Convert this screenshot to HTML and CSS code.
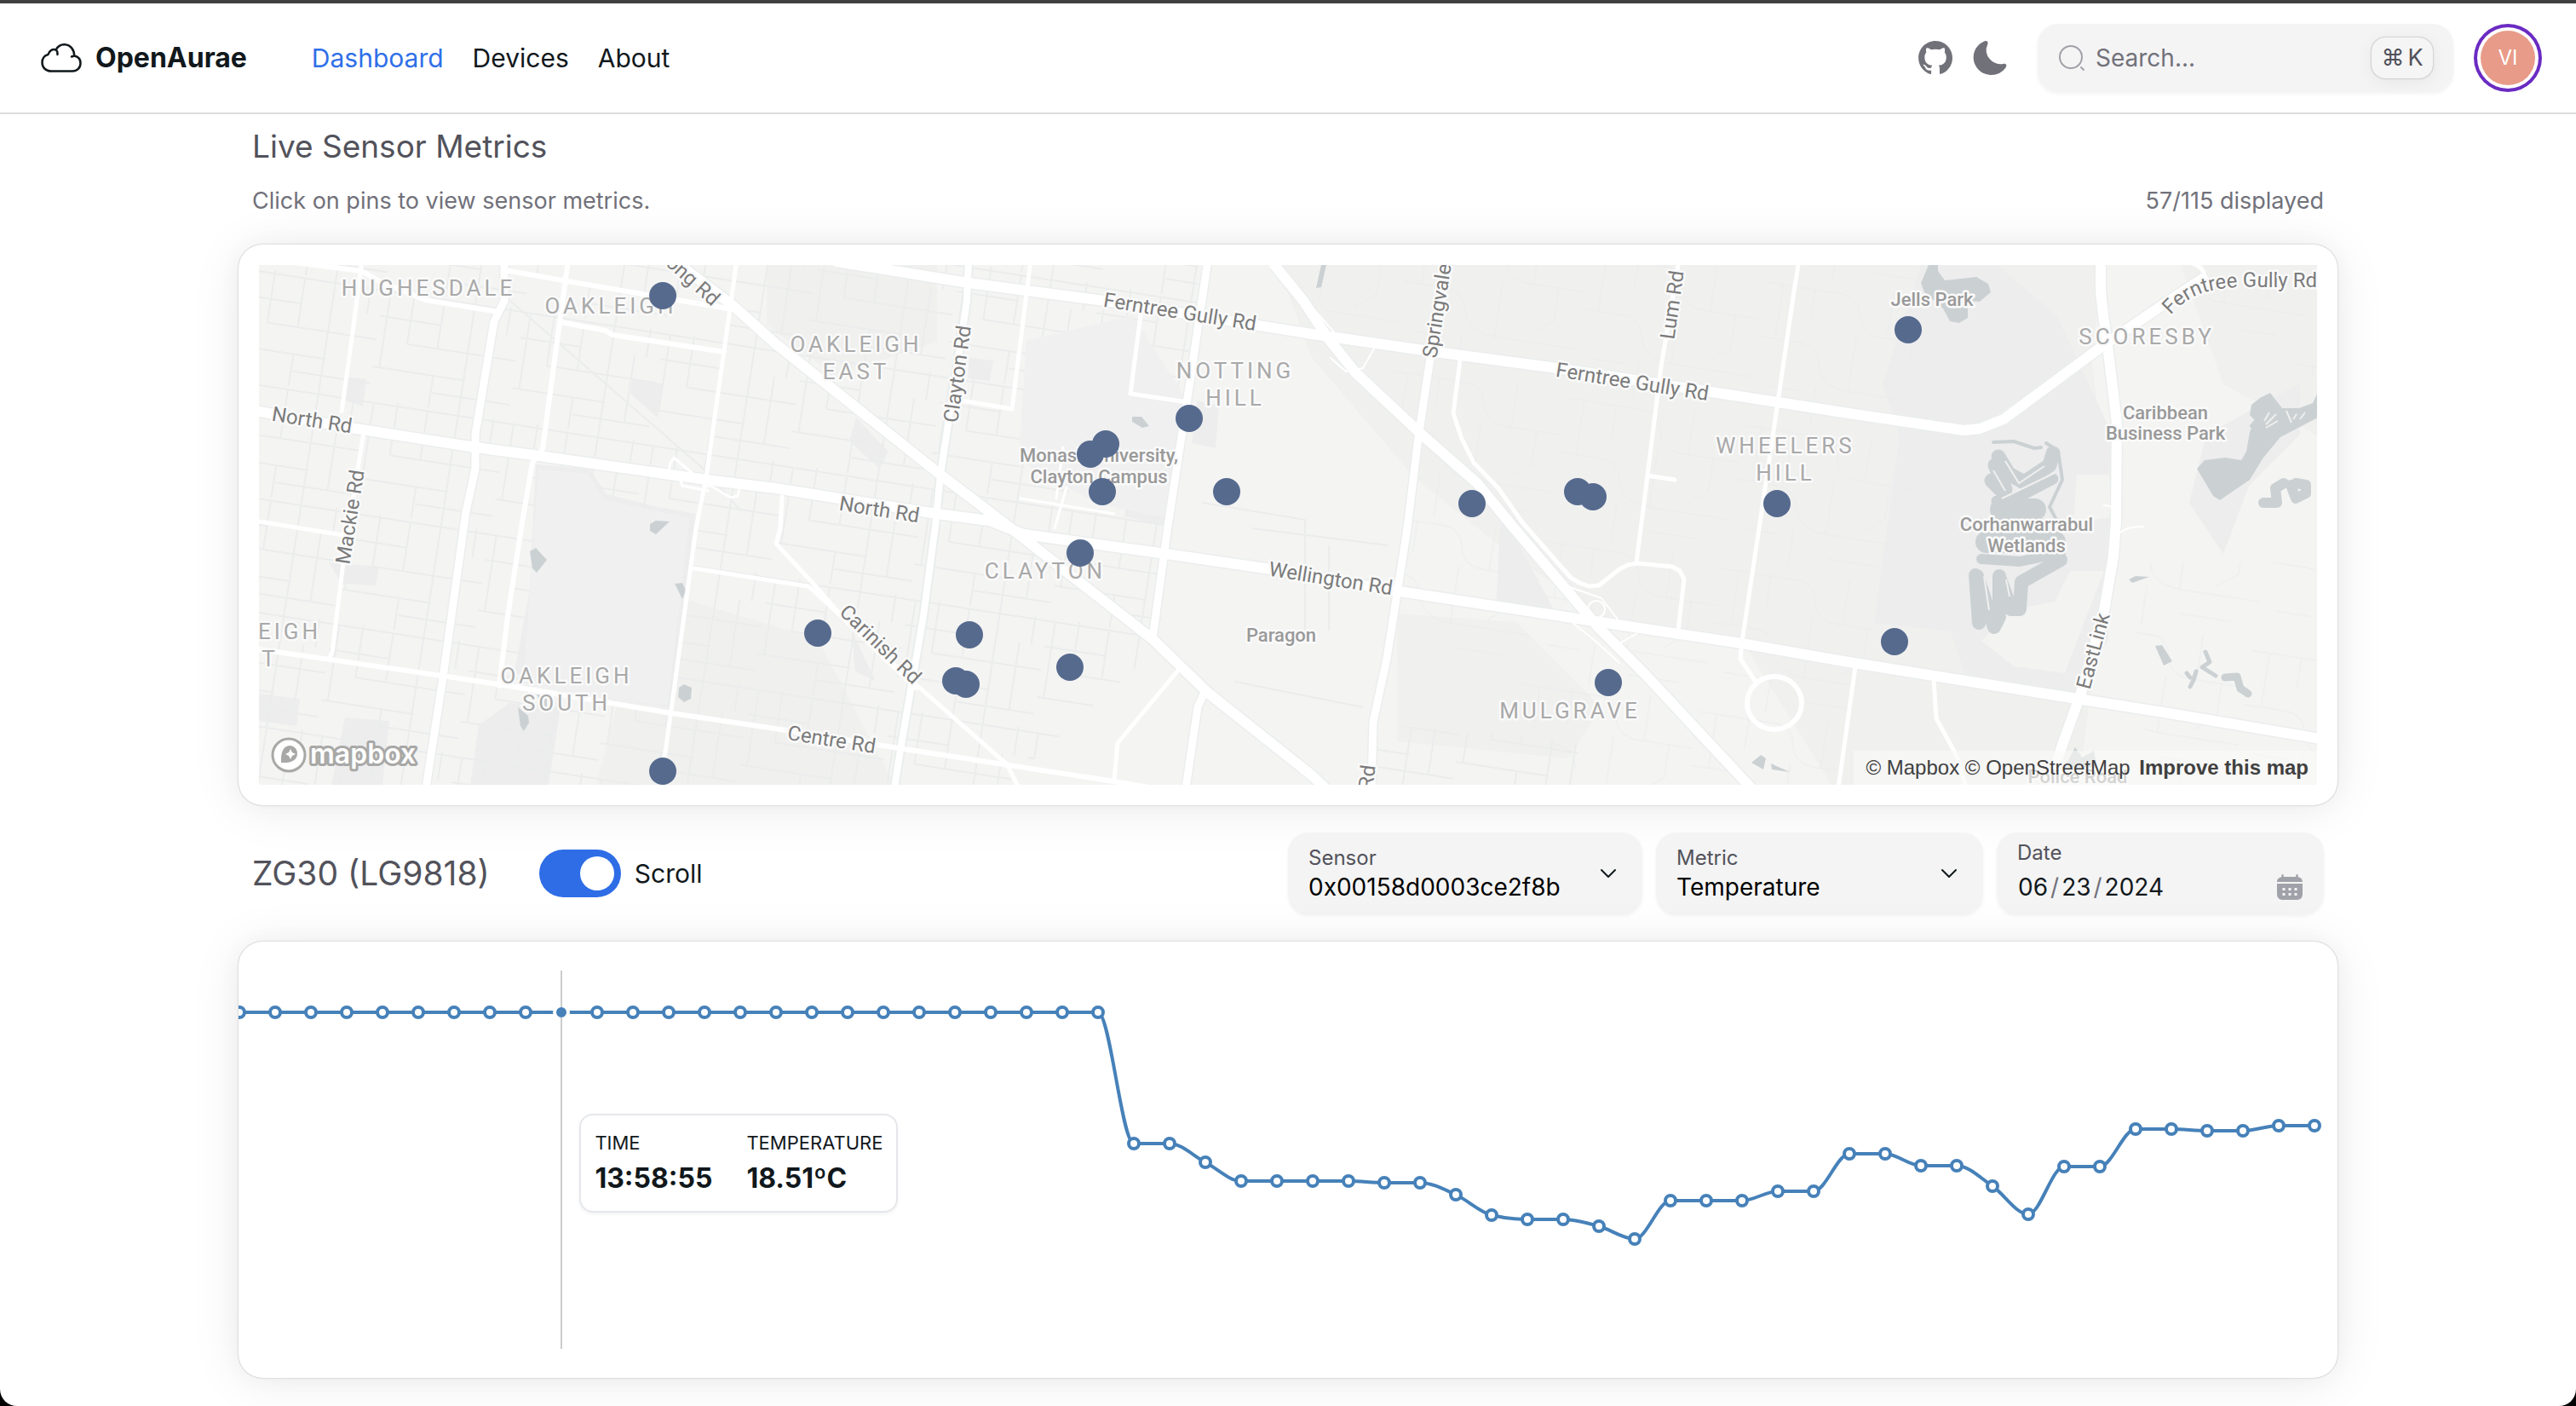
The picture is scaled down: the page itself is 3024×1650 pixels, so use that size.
FILE: index.html
```html
<!DOCTYPE html>
<html lang="en">
<head>
<meta charset="utf-8">
<title>OpenAurae</title>
<link rel="stylesheet" href="styles.css">
</head>
<body>
<header class="navbar">
  <a class="brand" href="#">
    <svg class="brand-icon" viewBox="0 0 48 36" fill="none" stroke="currentColor" stroke-width="2.500" stroke-linecap="round" stroke-linejoin="round"><path d="M12 33.500C6 33.500 1.500 29.500 1.500 23.500c0-5 3-8.500 7-9.500C10 9 14 7 17.500 8.500 20 4 24 2 28 2.300c7 .5 11 6 11.300 13.200 4.500 1 7.200 4.500 7.200 8.700 0 5.300-4 9.300-9.500 9.300zM17.500 8.500c1.500.8 2.200 3 2 5.500M36 16.500l3.300-1"/></svg>
    OpenAurae
  </a>
  <nav class="nav-links">
    <a class="active" href="#">Dashboard</a>
    <a href="#">Devices</a>
    <a href="#">About</a>
  </nav>
  <div class="nav-tools">
    <a class="icon-link" href="#" aria-label="GitHub">
      <svg viewBox="0 0 24 24" fill="currentColor"><path fill-rule="evenodd" d="M12.026 2c-5.509 0-9.974 4.465-9.974 9.974 0 4.406 2.857 8.145 6.821 9.465.499.090.679-.217.679-.481 0-.237-.008-.865-.011-1.696-2.775.602-3.361-1.338-3.361-1.338-.452-1.152-1.107-1.459-1.107-1.459-.905-.619.069-.605.069-.605 1.002.070 1.527 1.028 1.527 1.028.890 1.524 2.336 1.084 2.902.829.091-.645.351-1.085.635-1.334-2.214-.251-4.542-1.107-4.542-4.930 0-1.087.389-1.979 1.024-2.675-.101-.253-.446-1.268.099-2.640 0 0 .837-.269 2.742 1.021a9.582 9.582 0 0 1 2.496-.336 9.554 9.554 0 0 1 2.496.336c1.906-1.291 2.742-1.021 2.742-1.021.545 1.372.203 2.387.099 2.640.640.696 1.024 1.587 1.024 2.675 0 3.833-2.330 4.675-4.552 4.922.355.308.675.916.675 1.846 0 1.334-.012 2.410-.012 2.737 0 .267.178.577.687.479C19.146 20.115 22 16.379 22 11.974 22 6.465 17.535 2 12.026 2z"/></svg>
    </a>
    <button class="icon-link" type="button" aria-label="Toggle theme">
      <svg viewBox="0 0 24 24" fill="currentColor"><path d="M21.530 15.930c-.160-.270-.610-.690-1.730-.490a8.460 8.460 0 0 1-1.880.130 8.409 8.409 0 0 1-5.910-2.820 8.068 8.068 0 0 1-1.440-8.660c.440-1.010.130-1.540-.090-1.760s-.770-.550-1.830-.110a10.318 10.318 0 0 0-6.320 10.210 10.475 10.475 0 0 0 7.040 8.990 10 10 0 0 0 2.890.550c.160.010.320.020.480.020a10.500 10.500 0 0 0 8.470-4.270c.670-.930.490-1.519.320-1.790z"/></svg>
    </button>
    <div class="search">
      <svg class="search-icon" viewBox="0 0 32 32" fill="none" stroke="currentColor" stroke-width="2" stroke-linecap="round"><circle cx="15" cy="15" r="13"/><path d="M27 27l3 3"/></svg>
      <input type="search" placeholder="Search..." aria-label="Search">
      <kbd><span>⌘</span><span>K</span></kbd>
    </div>
    <button class="avatar" type="button">VI</button>
  </div>
</header>

<main class="page">
  <div class="intro">
    <h1>Live Sensor Metrics</h1>
    <div class="intro-row">
      <p>Click on pins to view sensor metrics.</p>
      <p>57/115 displayed</p>
    </div>
  </div>

  <section class="card map-card">
    <div class="map">
      <svg class="map-canvas" viewBox="304 311 2416 610">
        <defs>
          <pattern id="streets" width="166" height="132" patternUnits="userSpaceOnUse" patternTransform="rotate(8.800)">
            <path class="street" d="M0 4h166M0 34h72M36 62h130M0 94h110M74 114h92M8 4v90M36 0v62M72 4v58M72 94v38M108 0v132M136 34v80M150 0v34"/>
          </pattern>
          <pattern id="lanes" width="210" height="170" patternUnits="userSpaceOnUse" patternTransform="rotate(8.800)">
            <path class="lane" d="M0 10h90q20 0 24 22t30 22h66M0 74h50q20 0 26 24t40 24h94M20 10v64M58 10v36M114 54v68M150 0v54M180 54v40l-24 18M76 122v48M20 130h40M120 150h60"/>
          </pattern>
        </defs>
        <rect class="land" x="304" y="311" width="2416" height="610"/>
        <path class="land-dim" d="M1500 311H2470L2455 420 2480 620 2440 921H2150L2050 760 1900 740 1760 640 1660 560 1540 420zM900 311h200v90l-120 40-80-60zM1640 720l140 10 100 100-40 60-200-20zM2560 311h160v200l-110-60zM760 690l200 60 90 171H700z"/>
        <path class="park" d="M629 545l63 5 20 30 60 15 45 8-30 227-78-10-105-30 18-100zM598 825l60 6-14 90h-92l10-70zM2255 311h90l70 60 70 150-10 230-45 70-120-20-20-60-90-10 30-220-20-60zM2590 510l110-60v60l-60 60-30 80-40-60zM1405 470l26 6-4 50-28-6zM1324 540h56l-10 78-50-12zM1762 600l70 130-76-12zM386 660l59 5-4 22-40-2zM404 442l26 3-4 32-24-8zM304 814l48 6-4 32-44-6zM405 842l52 4-8 75h-60zM742 446l36 4-6 40-32-28zM1005 490l38 40-10 20-36-32zM1138 420l28 3-4 24-26-3zM1000 740l28 60-24-12z"/>
        <path class="sand" d="M2430 670h40l-34 88-12 32-60-8-38-30 34-36 52-10zM2438 557h38l4 50-46 6z"/>
        <path fill="url(#streets)" d="M304 311H1410L1360 760 1180 921H304zM1620 850l230 20 10 51h-260z"/>
        <path class="land-cover" d="M632 550l58 6 20 30 100 22-26 220-70-8-100-16zM1205 400l125-30 66 105-20 135-90-20-90-50z"/>
        <path fill="url(#lanes)" d="M1520 311H2250v250l-100 360H1870L1640 700 1660 520zM2500 660h220v261h-200zM2550 330h170v120z"/>
        <path class="street" d="M592 347L829 553 870 600M1412 590l120 20v130M1470 620l160 20M1560 640v100M1450 800l150 30"/>
        <g class="water">
          <path d="M622 647l7-4 13 14-12 15-5-5zM763 615l7-4 16 1-16 15-7-4zM792 685l9-1 4 9-4 10zM797 807l6-4 9 4-1 13-8 4-7-6zM608 830l12 10 1 8-6 10-4-6zM630 815l12 2v14l-6-2zM1329 489h11l9 11-8 2-12-7zM1551 311h6l-6 26-6 1zM2056 895l11-9 6 4-3 13zM2079 896l22 10-21-3zM2499 680l8-4 16 1-20 7zM2530 758l8-1 12 19-10 5zM2424 900l12-23 8 12 14-8 4 20z"/>
          <path d="M2264 311l-9 21 4 11 22 19 8 15 11 2 10-6v-20l14 1 13-11-3-10-14-8-37 4-8-11v-7z"/>
          <path d="M2579 550l9-10 24-3 19 3 6-10 4-23 6-14-6-6 2-12 10-8 12-6 14 18h20l16-6 6-13v30l-44 23-20 24-16 26-35 24-8-5z"/>
        </g>
        <g class="creek">
          <path stroke-width="17" d="M2346 536l12 20 18 10 30-20 4-14M2342 546l12 28M2338 564l14 14"/>
          <path stroke-width="13" d="M2344 588l28-6 38-20"/>
          <path stroke-width="16" d="M2319 675l4 56M2321 676l20 60 6-12 M2347 676v44M2347 677l14 38h10l2-32 46-26"/>
          <path stroke-width="26" d="M2349 598h40M2332 636h80"/>
          <path stroke-width="12" d="M2326 656l45 3 48-10"/>
          <path stroke-width="4" d="M2340 519l24-1 24 8 8-1M2402 520l14 9 5 34-15 32 8 15M2651 490l-8 10"/>
          <path stroke-width="12" d="M2657 590h16l-2-17 10-6M2689 569l6 16 12-6v-10l-12-2"/>
          <path stroke-width="5" d="M2589 765l5 12-9 6 16 10M2578 788l-3 10-4 8M2571 795l-4-5"/>
          <path stroke-width="9" d="M2612 795l14-1 4 14 9 6"/>
        </g>
        <g class="islands">
          <path d="M2354 541l16 26 30-20M2340 552l14 24M2350 585l62-30M2329 676l6 40M2355 680l4 20M2664 484l-6 10M2672 486l-12 12M2674 494l-14 8M2684 482l6 14M2696 486l-4 6M2706 484l-6 8"/>
        </g>
        <g id="roads">
          <g class="road-casing">
            <path stroke-width="15" d="M304 483L411 502 558 525 633 535 829 563 910 573 1100 603 1161 611 1202 627 1369 650 1492 668 1636 693 1865 728 2044 755 2170 777 2451 822 2546 837 2724 867M982 307L1137 332 1296 353 1540 392 1685 413 1828 432 2087 472 2170 485 2305 505 2324 503 2352 492 2467 407 2546 353 2586 327M784 300L862 360 910 403 1104 557 1192 624 1353 750 1418 813 1540 910 1563 932M1496 311L1530 353 1559 397 1591 437 1669 510 1734 567 1775 617 1877 737 1930 790 2056 925M2466 305V340L2469 370 2475 413 2485 497 2484 613 2481 653 2469 723 2443 813 2420 877 2405 925"/>
            <path stroke-width="12" d="M592 305V353L580 377 558 510V550L547 600 520 795 500 925M1137 305L1135 353 1104 557 1098 617 1084 723 1057 880 1050 925M1418 305L1394 467 1371 617 1353 750M1414 812L1406 830 1392 925M1701 305L1679 420 1665 513 1652 620 1628 773 1612 847 1610 925"/>
          </g>
          <g class="road">
            <path stroke-width="5" d="M425 305L414 390 401 483M427 507L419 557 403 660 390 765 386 773M865 305L829 560 817 620 788 833 775 925M304 612L403 628M815 667L910 682 949 688 1075 803 1182 897 1196 925M918 583L916 620 911 638 953 683 994 730 1075 808M1210 305L1188 480 1129 470M1339 370L1327 462 1394 472M1386 783L1312 872 1308 915M1714 423L1706 485 1716 515 1730 543 1759 573 1787 613 1844 678 1854 684 1865 688 1877 687 1901 668 1911 663 1922 661 1963 665 1972 670 1977 680 1970 740M1971 305L1950 430 1934 558 1921 660M1934 558L1966 563M2112 305L2106 342 2087 472 2065 620 2045 753 2043 773 2061 800M2178 782L2158 925M2270 797L2273 843 2297 887 2308 925M2570 308Q2588 312 2588 326"/>
            <ellipse cx="2083" cy="825" rx="32" ry="31" stroke-width="6"/>
            <path stroke-width="6" d="M345 308L425 318 445 330 499 352 580 365M592 317L666 330 854 362M667 305L650 430 637 527 625 543 613 613 596 723 586 805M658 378L711 388 719 393 850 413M304 762L519 793 597 805 788 837 910 855 1055 878 1178 897 1308 917 1349 924"/>
            <path stroke-width="3" d="M785 553l2-10 4-6 40 34M799 564l2 6 30 6M834 570l24 14 8-2 2-8M1198 585l110 18M1248 525l-8 60M1238 620l14-48"/>
            <path stroke-width="2" d="M1540 360l26 30M1562 420l18 16 20-4 18-32M1840 688l40 14 26 34M1922 743l-24 14M1845 730l30 24 26 24M2466 385l12 60M2486 605q-4-12-16-12M2486 630q4-12 30-12"/>
            <circle cx="1874" cy="715" r="10" stroke-width="2"/>
            <path stroke-width="9" d="M592 305V353L580 377 558 510V550L547 600 520 795 500 925M1418 305L1394 467 1371 617 1353 750M1414 812L1406 830 1392 925M1701 305L1679 420 1665 513 1652 620 1628 773 1612 847 1610 925"/>
            <path stroke-width="8" d="M1137 305L1135 353 1104 557 1098 617 1084 723 1057 880 1050 925"/>
            <path stroke-width="12" d="M304 483L411 502 558 525 633 535 829 563 910 573 1100 603 1161 611 1202 627 1369 650 1492 668 1636 693 1865 728 2044 755 2170 777 2451 822 2546 837 2724 867M982 307L1137 332 1296 353 1540 392 1685 413 1828 432 2087 472 2170 485 2305 505 2324 503 2352 492 2467 407 2546 353 2586 327M784 300L862 360 910 403 1104 557 1192 624 1353 750 1418 813 1540 910 1563 932M1496 311L1530 353 1559 397 1591 437 1669 510 1734 567 1775 617 1877 737 1930 790 2056 925M2466 305V340L2469 370 2475 413 2485 497 2484 613 2481 653 2469 723 2443 813 2420 877 2405 925"/>
          </g>
        </g>
        <g class="label suburb">
          <text x="503" y="347">HUGHESDALE</text>
          <text x="717" y="368">OAKLEIGH</text>
          <text x="1005" y="413">OAKLEIGH</text><text x="1005" y="445">EAST</text>
          <text x="1450" y="444">NOTTING</text><text x="1450" y="476">HILL</text>
          <text x="1227" y="679">CLAYTON</text>
          <text x="665" y="802">OAKLEIGH</text><text x="665" y="834">SOUTH</text>
          <text x="340" y="750">EIGH</text><text x="317" y="782">T</text>
          <text x="2096" y="532">WHEELERS</text><text x="2096" y="564">HILL</text>
          <text x="1843" y="843">MULGRAVE</text>
          <text x="2520" y="404">SCORESBY</text>
        </g>
        <g class="label poi">
          <text x="2268" y="359">Jells Park</text>
          <text x="2542" y="492">Caribbean</text><text x="2542" y="516">Business Park</text>
          <text x="2379" y="623">Corhanwarrabul</text><text x="2379" y="648">Wetlands</text>
          <text x="1290" y="542">Monash University,</text><text x="1290" y="567">Clayton Campus</text>
          <text x="1504" y="753">Paragon</text>
          <text x="2439" y="919">Police Road</text>
        </g>
        <g class="label street-name">
          <text transform="translate(365 501) rotate(9)">North Rd</text>
          <text transform="translate(419 608) rotate(-81)">Mackie Rd</text>
          <text transform="translate(808 335) rotate(42)">ong Rd</text>
          <text transform="translate(1132 440) rotate(-82)">Clayton Rd</text>
          <text transform="translate(1384 374) rotate(9)">Ferntree Gully Rd</text>
          <text transform="translate(1031 606) rotate(9)">North Rd</text>
          <text transform="translate(1695 366) rotate(-81)">Springvale</text>
          <text transform="translate(1971 359) rotate(-82)">Lum Rd</text>
          <text transform="translate(1915 456) rotate(9)">Ferntree Gully Rd</text>
          <text transform="translate(1561 687) rotate(9)">Wellington Rd</text>
          <text transform="translate(1028 762) rotate(44)">Carinish Rd</text>
          <text transform="translate(975 876) rotate(9)">Centre Rd</text>
          <text transform="translate(2465 766) rotate(-75)">EastLink</text>
          <text transform="translate(1613 913) rotate(-83)">Rd</text>
          <path id="gully-curve" fill="none" stroke="none" d="M2548 370Q2568 347 2596 341T2658 337H2760"/>
          <text class="from-start"><textPath href="#gully-curve">Ferntree Gully Rd</textPath></text>
        </g>
        <g class="pins">
          <circle cx="778" cy="347" r="16"/><circle cx="2240" cy="387" r="16"/><circle cx="1396" cy="491" r="16"/>
          <circle cx="1298" cy="521" r="16"/><circle cx="1280" cy="533" r="16"/><circle cx="1294" cy="577" r="16"/>
          <circle cx="1440" cy="577" r="16"/><circle cx="1728" cy="591" r="16"/><circle cx="1852" cy="577" r="16"/>
          <circle cx="1870" cy="583" r="16"/><circle cx="2086" cy="591" r="16"/><circle cx="1268" cy="649" r="16"/>
          <circle cx="960" cy="743" r="16"/><circle cx="1138" cy="745" r="16"/><circle cx="1256" cy="783" r="16"/>
          <circle cx="1122" cy="799" r="16"/><circle cx="1134" cy="803" r="16"/><circle cx="1888" cy="801" r="16"/>
          <circle cx="2224" cy="753" r="16"/><circle cx="778" cy="905" r="16"/>
        </g>
        <g class="map-logo">
          <circle cx="339" cy="886" r="19"/>
          <path d="M330 895q-1-20 11-20a9 9 0 0 1 8 9q0 12-19 11z"/>
          <path class="spark" d="M341 879l2 4 4 2-4 2-2 4-2-4-4-2 4-2z"/>
          <text x="364" y="896">mapbox</text>
        </g>
      </svg>
      <div class="attribution">
        <a href="#">© Mapbox</a> <a href="#">© OpenStreetMap</a> <a class="improve" href="#">Improve this map</a>
      </div>
    </div>
  </section>

  <div class="toolbar">
    <h2>ZG30 (LG9818)</h2>
    <label class="switch"><input type="checkbox" role="switch" checked>Scroll</label>
    <div class="filters">
      <div class="field sensor">
        <label for="sensor">Sensor</label>
        <select id="sensor"><option>0x00158d0003ce2f8b</option></select>
        <svg class="chevron" viewBox="0 0 32 32" fill="none" stroke="currentColor" stroke-width="2" stroke-linecap="round" stroke-linejoin="round"><path d="M8 12l8 8 8-8"/></svg>
      </div>
      <div class="field">
        <label for="metric">Metric</label>
        <select id="metric"><option>Temperature</option></select>
        <svg class="chevron" viewBox="0 0 32 32" fill="none" stroke="currentColor" stroke-width="2" stroke-linecap="round" stroke-linejoin="round"><path d="M8 12l8 8 8-8"/></svg>
      </div>
      <div class="field date">
        <label for="date">Date</label>
        <div class="date-row">
          <input id="date" type="date" value="2024-06-23">
          <svg class="calendar" viewBox="0 0 32 32" fill="currentColor"><path d="M7.500 1a1.200 1.200 0 0 1 1.200 1.200V4h14.600V2.200a1.200 1.200 0 0 1 2.400 0v2c3 .4 5.300 2.500 5.300 5.800H1c0-3.300 2.300-5.400 5.300-5.800v-2A1.200 1.200 0 0 1 7.500 1z"/><path fill-rule="evenodd" d="M1 12h30v12c0 4.500-2.500 7-7 7H8c-4.500 0-7-2.500-7-7zm6.500 5v3h3v-3zm7 0v3h3v-3zm7 0v3h3v-3zm-14 6v3h3v-3zm7 0v3h3v-3zm7 0v3h3v-3z"/></svg>
        </div>
      </div>
    </div>
  </div>

  <section class="card chart-card">
    <svg class="chart" id="chart" viewBox="0 0 2464 512"></svg>
    <dl class="tooltip">
      <div><dt>TIME</dt><dd>13:58:55</dd></div>
      <div><dt>TEMPERATURE</dt><dd>18.51ºC</dd></div>
    </dl>
  </section>
</main>
<script src="chart.js"></script>
</body>
</html>
```
FILE: styles.css
```css
* { box-sizing: border-box; }

html { background: #000; }

body {
  margin: 0;
  min-height: 100vh;
  border-top: 4px solid #404040;
  border-radius: 0 0 20px 20px;
  background: #fff;
  color: #11181c;
  font-family: Inter, "Liberation Sans", sans-serif;
  font-size: 30px;
  line-height: 48px;
  overflow: hidden;
}

h1, h2, p, dl, dd { margin: 0; }
a { color: inherit; text-decoration: none; }
button, input, select { font: inherit; color: inherit; border: 0; padding: 0; margin: 0; background: none; }

/* Navigation bar */
.navbar {
  display: flex;
  align-items: center;
  height: 130px;
  padding: 0 48px;
  border-bottom: 2px solid #dcdddd;
}
.brand { display: flex; align-items: center; gap: 16px; font-size: 32px; font-weight: 700; }
.brand-icon { width: 48px; height: 36px; }
.nav-links { display: flex; gap: 34px; margin-left: 76px; }
.nav-links .active { color: #2f6fe8; }
.nav-tools { display: flex; align-items: center; margin-left: auto; gap: 32px; }
.icon-link { width: 48px; height: 48px; color: #71717a; }
.icon-link svg { display: block; width: 48px; height: 48px; }
.icon-link + .icon-link { margin-left: -16px; }
.search {
  display: flex;
  align-items: center;
  width: 488px;
  height: 80px;
  padding: 0 24px;
  gap: 12px;
  border-radius: 24px;
  background: #f4f4f4;
  box-shadow: 0 2px 4px rgba(0, 0, 0, .05);
  font-size: 28px;
}
.search-icon { width: 32px; height: 32px; color: #a1a1aa; flex: none; }
.search input { flex: 1; min-width: 0; outline: 0; }
.search input::placeholder { color: #71717a; opacity: 1; }
kbd {
  display: flex;
  align-items: center;
  justify-content: center;
  gap: 4px;
  width: 72px;
  height: 48px;
  border-radius: 16px;
  background: #f5f5f5;
  box-shadow: 0 0 2px rgba(0, 0, 0, .4), 0 4px 20px rgba(0, 0, 0, .06);
  color: #52525b;
  font-family: inherit;
  font-size: 27px;
}
.avatar {
  width: 64px;
  height: 64px;
  border-radius: 50%;
  background: #e89b88;
  box-shadow: 0 0 0 4px #fff, 0 0 0 8px #6a2bc2;
  color: #fff;
  font-size: 24px;
}

/* Page body */
.page { max-width: 2560px; margin: 0 auto; padding: 8px 48px 32px; }
.intro { padding: 0 16px; margin-bottom: 29px; }
h1, h2 { line-height: 60px; font-weight: 400; color: #52525b; }
h1 { font-size: 37px; }
h2 { font-size: 39px; }
.intro-row { display: flex; justify-content: space-between; margin-top: 12px; font-size: 27px; line-height: 44px; color: #71717a; }
.card {
  position: relative;
  border-radius: 28px;
  background: #fff;
  box-shadow: 0 0 30px rgba(0, 0, 0, .03), 0 4px 60px rgba(0, 0, 0, .08), 0 0 2px rgba(0, 0, 0, .3);
}

/* Map */
.map-card { padding: 24px; }
.map { position: relative; overflow: hidden; }
.map-canvas { display: block; width: 100%; height: auto; }
.land { fill: #f4f4f3; }
.land-dim { fill: #f0f0ef; }
.land-cover { fill: #f0f0ef; opacity: .9; }
.park { fill: #ededee; }
.sand { fill: #f3f3f2; }
.street { fill: none; stroke: #eaedec; stroke-width: 2; }
.lane { fill: none; stroke: #e9ecec; stroke-width: 1; }
.water path { fill: #cbd1d3; }
.creek path { fill: none; stroke: #cbd1d3; stroke-linecap: round; stroke-linejoin: round; }
.islands path { fill: none; stroke: #efefee; stroke-width: 2; }
.road-casing path { fill: none; stroke: #eaeeed; stroke-linejoin: round; }
.road > * { fill: none; stroke: #fff; stroke-linejoin: round; stroke-linecap: round; }
.label { font-family: Roboto, "Open Sans", sans-serif; text-anchor: middle; paint-order: stroke; stroke: #fafafa; stroke-width: 5; stroke-linejoin: round; }
.suburb { font-size: 26px; letter-spacing: 4px; fill: #a9a9a9; }
.poi { font-size: 22px; font-weight: 500; fill: #999; }
.street-name { font-size: 24px; fill: #7b7b7b; }
.from-start { text-anchor: start; }
.pins { fill: #566a8e; }
.map-logo circle { fill: #fff; stroke: #a8a8a6; stroke-width: 3; }
.map-logo path { fill: #a8a8a6; }
.map-logo .spark { fill: #fff; }
.map-logo text { font-family: Inter, sans-serif; font-size: 32px; font-weight: 600; fill: #fff; paint-order: stroke; stroke: #a8a8a6; stroke-width: 6; stroke-linejoin: round; }
.attribution {
  position: absolute;
  right: 0;
  bottom: 0;
  padding: 0 10px 0 14px;
  background: rgba(250, 250, 249, .6);
  color: #404040;
  font-family: "Liberation Sans", Arial, sans-serif;
  font-size: 24px;
  line-height: 40px;
}
.improve { margin-left: 4px; font-weight: 700; }

/* Chart controls */
.toolbar { display: flex; align-items: center; height: 96px; margin: 32px 0; padding: 0 16px; }
.switch { display: flex; align-items: center; gap: 16px; margin-left: 58px; }
.switch input {
  appearance: none;
  width: 96px;
  height: 56px;
  padding: 8px;
  border-radius: 28px;
  background: #2f6de6;
}
.switch input::before {
  content: "";
  display: block;
  width: 40px;
  height: 40px;
  margin-left: 40px;
  border-radius: 50%;
  background: #fff;
}
.filters { display: flex; gap: 16px; margin-left: auto; }
.field {
  position: relative;
  display: flex;
  flex-direction: column;
  justify-content: center;
  width: 384px;
  height: 96px;
  padding: 0 24px;
  border-radius: 24px;
  background: #f4f4f4;
  box-shadow: 0 2px 4px rgba(0, 0, 0, .05);
}
.field.sensor { width: 416px; }
.field label { font-size: 24px; line-height: 32px; color: #52525b; }
.field select, .field input { appearance: none; height: 36px; font-size: 28px; line-height: 36px; outline: 0; }
.field select { color: #000; }
.chevron { position: absolute; right: 24px; top: 32px; width: 32px; height: 32px; pointer-events: none; }
.field.date { justify-content: flex-start; padding-top: 8px; }
.date-row { display: flex; align-items: center; justify-content: space-between; margin-top: 6px; }
.date-row input::-webkit-calendar-picker-indicator { display: none; }
.date-row input::-webkit-datetime-edit-fields-wrapper { padding: 0; }
.date-row input::-webkit-datetime-edit-text { padding: 0 2px; color: #71717a; }
.calendar { width: 32px; height: 32px; color: #a1a1aa; }

/* Chart */
.chart-card { overflow: hidden; }
.chart { display: block; width: 100%; height: auto; }
.series { fill: none; stroke: #4681b9; stroke-width: 4; }
.dot { fill: #fff; stroke: #4681b9; stroke-width: 4; }
.dot-active { fill: #4681b9; stroke: #fff; stroke-width: 4; }
.cursor { stroke: #ccc; stroke-width: 2; }
.tooltip {
  position: absolute;
  left: 16.25%;
  top: 39.5%;
  display: flex;
  gap: 40px;
  padding: 14px 16px;
  border: 2px solid #e5e7eb;
  border-radius: 16px;
  background: #fff;
  box-shadow: 0 2px 4px rgba(0, 0, 0, .05);
}
.tooltip dt { font-size: 22px; line-height: 36px; }
.tooltip dd { font-weight: 700; font-size: 32px; line-height: 48px; }
```
FILE: chart.js
```js
// Plots one day of readings as a monotone line with a dot for each reading.
const step = 42;
const active = 9;
const ys = [
  ...Array(25).fill(83), 237, 237, 259, 281, 281, 281, 281, 283, 283, 297, 321,
  326, 326, 334, 349, 304, 304, 304, 293, 293, 249, 249, 263, 263, 287, 320,
  264, 264, 220, 220, 222, 222, 216, 216
];
const pts = ys.map((y, i) => [1 + i * step, y]);
const slope = i => (ys[i + 1] - ys[i]) / step;
const tangent = pts.map((_, i) => {
  if (i === 0 || i === pts.length - 1) return 0;
  const a = slope(i - 1), b = slope(i);
  if (a * b <= 0) return 0;
  return Math.sign(a) * 2 * Math.min(Math.abs(a), Math.abs(b), Math.abs(a + b) / 4);
});
let d = `M${pts[0]}`;
for (let i = 1; i < pts.length; i++) {
  const [x0, y0] = pts[i - 1], [x1, y1] = pts[i], k = step / 3;
  d += `C${x0 + k},${y0 + k * tangent[i - 1]} ${x1 - k},${y1 - k * tangent[i]} ${x1},${y1}`;
}
const ax = pts[active][0];
document.getElementById('chart').innerHTML =
  `<path class="series" d="${d}"/>` +
  pts.map(([x, y], i) => i === active ? '' : `<circle class="dot" cx="${x}" cy="${y}" r="6"/>`).join('') +
  `<circle class="dot-active" cx="${ax}" cy="${ys[active]}" r="8"/>` +
  `<path class="cursor" d="M${ax} 34V${ys[active] - 6}M${ax} ${ys[active] + 6}V478"/>`;
```
